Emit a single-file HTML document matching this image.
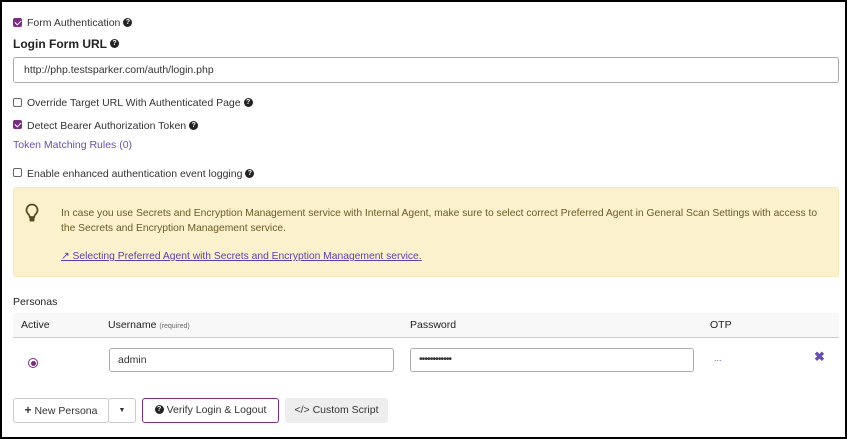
<!DOCTYPE html>
<html><head><style>
*{box-sizing:border-box}
body{margin:0;width:847px;height:439px;background:#fff;font-family:"Liberation Sans",sans-serif;font-size:10.5px;color:#333;position:relative;overflow:hidden}
.frame{position:absolute;left:0;top:0;width:847px;height:439px;border:2px solid #000}
.a{position:absolute;white-space:nowrap}
.cb{position:absolute;width:9px;height:9px;border:1px solid #666;border-radius:2px;background:#fff}
.cb.on{background:#7b2d82;border-color:#7b2d82}
.cb.on:after{content:"";position:absolute;left:2px;top:0px;width:3px;height:5px;border:solid #fff;border-width:0 1.5px 1.5px 0;transform:rotate(45deg)}
.q{display:inline-block;width:9px;height:9px;border-radius:50%;background:#222;color:#fff;font-size:7px;font-weight:bold;text-align:center;line-height:9px;position:relative;top:-1px;margin-left:3px;vertical-align:middle}
.inp{position:absolute;border:1px solid #aaa;border-radius:3px;background:#fff;padding-left:12px;font-size:10.5px;color:#333}
.btn{position:absolute;height:25px;border:1px solid #ccc;border-radius:3px;background:#fff;font-size:10.5px;line-height:23px;text-align:center;color:#333}
</style></head><body>
<div class="cb on" style="left:13px;top:18px"></div>
<div class="a" style="left:27px;top:17px">Form Authentication<span class="q">?</span></div>
<div class="a" style="left:13px;top:37px;font-weight:bold;font-size:12px;color:#222">Login Form URL<span class="q">?</span></div>
<div class="inp" style="left:13px;top:57px;width:826px;height:26px;line-height:24px;padding-left:10px">http://php.testsparker.com/auth/login.php</div>
<div class="cb" style="left:13px;top:98px"></div>
<div class="a" style="left:27px;top:97px">Override Target URL With Authenticated Page<span class="q">?</span></div>
<div class="cb on" style="left:13px;top:120px"></div>
<div class="a" style="left:27px;top:120px">Detect Bearer Authorization Token<span class="q">?</span></div>
<div class="a" style="left:13px;top:139px;color:#6b4fae">Token Matching Rules (0)</div>
<div class="cb" style="left:13px;top:168px"></div>
<div class="a" style="left:27px;top:168px">Enable enhanced authentication event logging<span class="q">?</span></div>
<div class="a" style="left:13px;top:187px;width:826px;height:90px;background:#fcf1cd;border:1px solid #f8e8b8;border-radius:3px"></div>
<svg class="a" style="left:25px;top:203px" width="14" height="20" viewBox="0 0 14 20"><path d="M7 1.5a5.5 5.5 0 0 0-3.5 9.7c.8.8 1.2 1.6 1.2 2.8h4.6c0-1.2.4-2 1.2-2.8A5.5 5.5 0 0 0 7 1.5z" fill="none" stroke="#5a4a20" stroke-width="1.8"/><rect x="4.5" y="14.5" width="5" height="4" rx="1" fill="#5a4a20"/></svg>
<div class="a" style="left:61px;top:206px;color:#6b5a28;line-height:15px;font-size:10.3px">In case you use Secrets and Encryption Management service with Internal Agent, make sure to select correct Preferred Agent in General Scan Settings with access to<br>the Secrets and Encryption Management service.</div>
<div class="a" style="left:61px;top:250px;color:#5b3fae;text-decoration:underline;font-size:10.3px">&#x2197; Selecting Preferred Agent with Secrets and Encryption Management service<span style="color:#6b5a28;text-decoration:none">.</span></div>
<div class="a" style="left:13px;top:296px;color:#222">Personas</div>
<div class="a" style="left:13px;top:313px;width:826px;height:25px;background:#f8f8f8;border-bottom:1px solid #ccc"></div>
<div class="a" style="left:21px;top:319px;color:#222">Active</div>
<div class="a" style="left:108px;top:319px;color:#222">Username <span style="font-size:7px;color:#666">(required)</span></div>
<div class="a" style="left:410px;top:319px;color:#222">Password</div>
<div class="a" style="left:710px;top:319px;color:#222">OTP</div>
<div class="a" style="left:28px;top:358px;width:10px;height:10px;border-radius:50%;border:1px solid #7b2d82;background:#fff"><div style="margin:1.5px;width:5px;height:5px;border-radius:50%;background:#7b2d82"></div></div>
<div class="inp" style="left:109px;top:348px;width:285px;height:24px;line-height:22px;padding-left:8px">admin</div>
<div class="inp" style="left:410px;top:348px;width:284px;height:24px;line-height:20px;padding-left:8px;letter-spacing:-1px">••••••••••••</div>
<div class="a" style="left:714px;top:353px;color:#6b4fae;font-size:9px">...</div>
<div class="a" style="left:814px;top:349px;color:#6b4fae;font-size:13px;font-weight:bold">✖</div>
<div class="btn" style="left:13px;top:398px;width:96px"><b style="font-size:12px">+</b> New Persona</div>
<div class="btn" style="left:108px;top:398px;width:28px;font-size:7px">▼</div>
<div class="btn" style="left:142px;top:398px;width:137px;border-color:#7b2d82"><span class="q" style="margin:0 3px 0 0">?</span>Verify Login &amp; Logout</div>
<div class="btn" style="left:285px;top:398px;width:103px;background:#eee;border-color:#eee">&lt;/&gt; Custom Script</div>
<div class="frame"></div>
</body></html>
